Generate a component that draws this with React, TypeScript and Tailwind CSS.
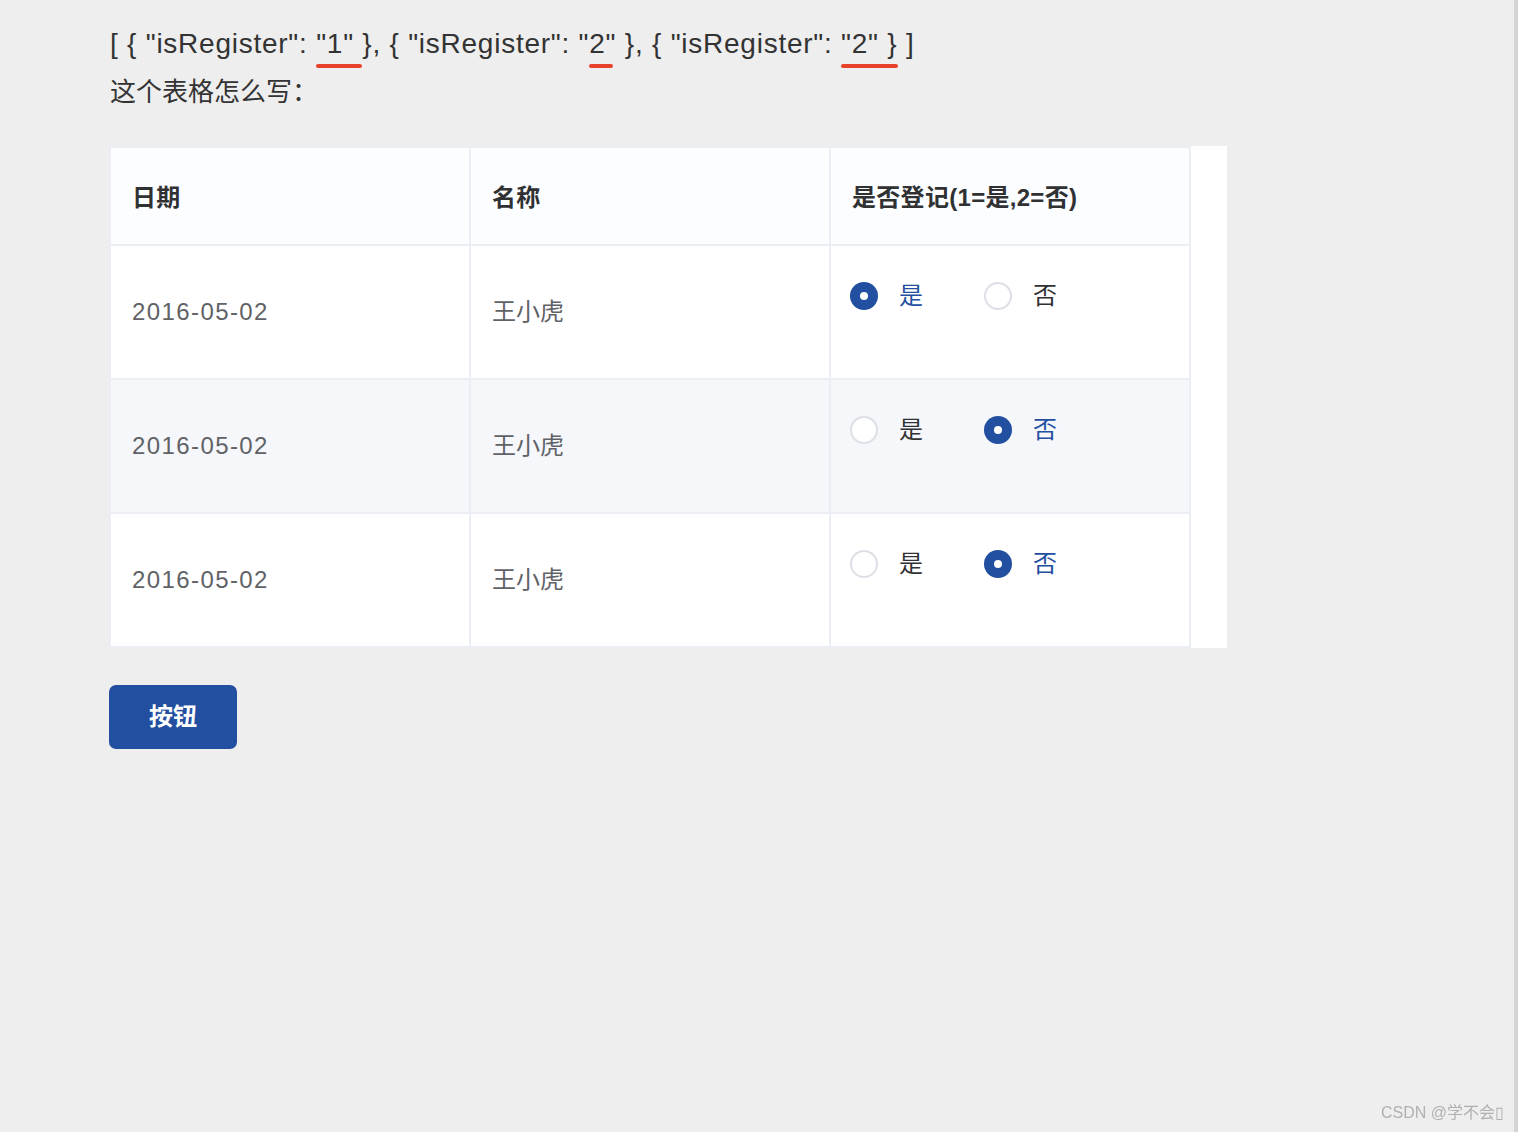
import React from "react"

const rows = [
  { date: "2016-05-02", name: "王小虎", isRegister: "1" },
  { date: "2016-05-02", name: "王小虎", isRegister: "2" },
  { date: "2016-05-02", name: "王小虎", isRegister: "2" },
]

const font = { fontFamily: '"Liberation Sans", "Noto Sans CJK SC", sans-serif' }

function Mark({ children, w }: { children: React.ReactNode; w: string }) {
  return (
    <span className="relative">
      {children}
      <span className={`absolute left-0 top-[36px] h-[4px] rounded-full bg-[#e8412c] ${w}`} />
    </span>
  )
}

function Radio({ checked, label }: { checked: boolean; label: string }) {
  return (
    <label className="flex items-center gap-[21px]">
      {checked ? (
        <span className="w-[28px] h-[28px] rounded-full bg-[#234fa0] flex items-center justify-center">
          <span className="w-[8px] h-[8px] rounded-full bg-white" />
        </span>
      ) : (
        <span className="w-[28px] h-[28px] rounded-full border-2 border-[#dcdfe6] bg-white" />
      )}
      <span className={`text-[24px] leading-none ${checked ? "text-[#234fa0]" : "text-[#303133]"}`}>{label}</span>
    </label>
  )
}

export default function App() {
  return (
    <div className="min-h-[1132px] bg-[#eeeeee] flex" style={font}>
      <main className="flex-1 pl-[110px] pt-[26px]">
        <p className="text-[28px] leading-[36px] text-[#333] tracking-[0.75px]">
          [ {"{"} "isRegister": <Mark w="w-[46px] -left-[1px]">"1" </Mark>{"}"}, {"{"} "isRegister": "
          <Mark w="w-[24px] left-[0px]">2</Mark>" {"}"}, {"{"} "isRegister": <Mark w="w-[57px]">"2" {"}"}</Mark> ]
        </p>
        <p className="text-[26px] leading-[36px] mt-[12px] text-[#333]">这个表格怎么写：</p>

        <div className="mt-[36px] -ml-[1px] w-[1118px] bg-white flex">
          <table className="border-collapse w-[1082px] table-fixed">
            <thead>
              <tr className="h-[98px] bg-[#fcfdff]">
                {["日期", "名称", "是否登记(1=是,2=否)"].map((h) => (
                  <th
                    key={h}
                    className="w-[360px] border-2 border-[#ebeef5] text-left align-middle px-[21px] pt-[4px] text-[24px] font-bold text-[#303133] tracking-[0.3px]"
                  >
                    {h}
                  </th>
                ))}
              </tr>
            </thead>
            <tbody>
              {rows.map((r, i) => (
                <tr key={i} className={`h-[134px] ${i % 2 === 1 ? "bg-[#f5f7fa]" : "bg-white"}`}>
                  <td className="border-2 border-[#ebeef5] px-[21px] text-[24px] text-[#606266] align-middle tracking-[1.4px]">{r.date}</td>
                  <td className="border-2 border-[#ebeef5] px-[21px] text-[24px] text-[#606266] align-middle">{r.name}</td>
                  <td className="border-2 border-[#ebeef5] px-[19px] pt-[36px] align-top">
                    <div className="flex gap-[61px]">
                      <Radio checked={r.isRegister === "1"} label="是" />
                      <Radio checked={r.isRegister === "2"} label="否" />
                    </div>
                  </td>
                </tr>
              ))}
            </tbody>
          </table>
        </div>

        <button className="mt-[37px] -ml-[1px] w-[128px] h-[64px] rounded-[7px] bg-[#234fa0] text-white text-[24px] font-bold">
          按钮
        </button>
      </main>
      <div className="w-[4px] bg-[#d4d4d4]" />
      <span className="fixed right-[14px] bottom-[7px] text-[16px] text-[#b0b0b0]">CSDN @学不会▯</span>
    </div>
  )
}
